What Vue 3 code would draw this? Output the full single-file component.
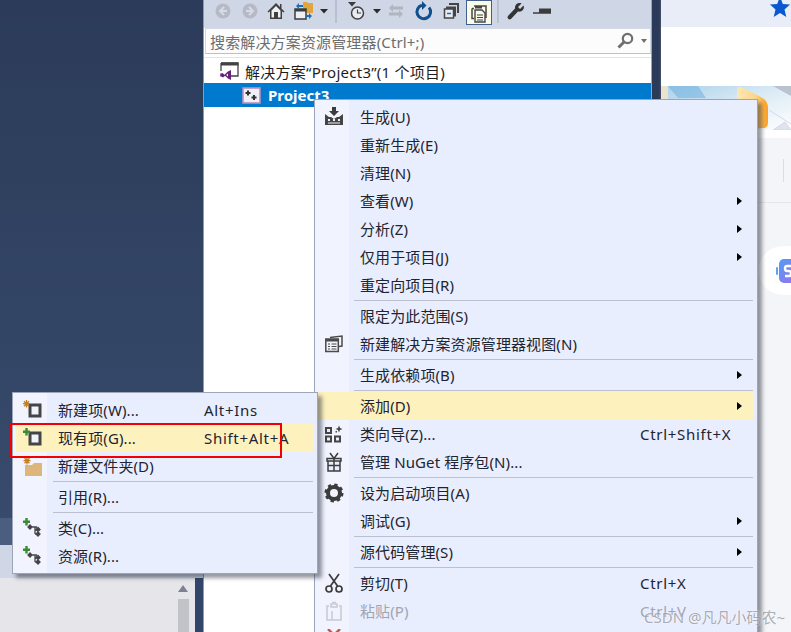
<script setup>
const tools = [
  { k: 'back', c: 's27' }, { k: 'forward', c: 's27' }, { k: 'home', c: 's26' }, { k: 'sync', c: 's30' },
  { k: 'dd', c: 's10' }, { k: 'sep', c: 's14' }, { k: 'history', c: 's28' }, { k: 'dd', c: 's12' },
  { k: 'swap', c: 's26' }, { k: 'refresh', c: 's29' }, { k: 'collapse', c: 's28' }, { k: 'pages', c: 's26 active' },
  { k: 'sep', c: 's11' }, { k: 'wrench', c: 's25' }, { k: 'minus', c: 's28' }
]

const icons = {
  back: '<circle cx="10" cy="10" r="7.5" fill="#b5bac6"/><path d="M11 6 7 10l4 4M7.5 10H14" fill="none" stroke="#d6dbe7" stroke-width="2"/>',
  forward: '<circle cx="10" cy="10" r="7.5" fill="#b5bac6"/><path d="M9 6l4 4-4 4M12.500 10H6" fill="none" stroke="#d6dbe7" stroke-width="2"/>',
  home: '<path d="M10 2 1.500 10.500l1 1L4 10.200V18h12v-7.800l1.500 1.300 1-1L15.500 7.500V3H14v3L10 2z" fill="#404040"/><path d="M5.500 9.500 10 5l4.500 4.500v7H12V11H8v5.500H5.500z" fill="#eef0f4"/>',
  sync: '<path d="M9 1h4l1 1h5v10H9z" fill="#e0a63c"/><path d="M1 8h11v10H1z" fill="#eef0f4" stroke="#3c3c3c" stroke-width="1.500"/><path d="M1 8h11v2.500H1z" fill="#3c3c3c"/><path d="M2 5 5 2v2h4v2H5v2z" fill="#1c6fb5"/><path d="M18 15l-3 3v-2h-3v-2h3v-2z" fill="#1c6fb5"/>',
  dd: '<path d="M6 8h8l-4 4.500z" fill="#2c2c2c"/>',
  sep: '<path d="M10 -2v24" stroke="#a3aabb"/>',
  history: '<path d="M1 1h8L5 5.500z" fill="#3c3c3c"/><circle cx="10.500" cy="12" r="6" fill="#e8ebf2" stroke="#404040" stroke-width="1.500"/><path d="M10.500 8.500V12H14" fill="none" stroke="#404040" stroke-width="1.200"/>',
  swap: '<path d="M7 3 3 7l4 4V8.500h10v-3H7zM13 9l4 4-4 4v-2.500H3v-3h10z" fill="#b0b5c0"/>',
  refresh: '<path d="M15 6.500A6.800 6.800 0 1 1 8 4.300" fill="none" stroke="#10508f" stroke-width="3"/><path d="M8 0v9l4.500-4.500z" fill="#10508f"/>',
  collapse: '<path d="M7 2h10v10h-2V4H7z" fill="#454545"/><rect x="4" y="5.500" width="10" height="10" fill="#454545"/><rect x="2.500" y="8" width="9" height="9" fill="#e8ebf2" stroke="#454545" stroke-width="1.500"/><path d="M5 12.500h4" stroke="#1c6fb5" stroke-width="1.500"/>',
  pages: '<path d="M5 3h12v12" fill="none" stroke="#454545" stroke-width="1.500"/><path d="M3 5.500h2M3 5.500v10h2" fill="none" stroke="#454545" stroke-width="1.500"/><rect x="6" y="3" width="7" height="2.500" fill="#454545"/><path d="M6 7h7l3 3v9H6z" fill="#f7f7ea" stroke="#454545" stroke-width="1.400"/><path d="M8 12h6M8 14.500h6M8 17h6" stroke="#454545"/>',
  wrench: '<path d="M17.500 4.500 14 8l-2-2 3.500-3.500C12.500 1 8.500 3 9 7.500L2 15c-1.500 2 1 4.500 3 3l7-7.500c4.500 1 7-3 5.500-6z" fill="#333"/>',
  minus: '<path d="M1 12h18" stroke="#3c3c3c" stroke-width="1.500"/><rect x="7" y="7.500" width="12" height="4.500" fill="#3c3c3c"/>',
  build: '<path d="M8 0h4v4h3l-5 5-5-5h3z" fill="#3c3c3c"/><path d="M1 18V7l4 3h2l3 2 3-2h2l4-3v11z" fill="#454545"/><path d="M4 12h2v2H4zM9 12h2v2H9zM14 12h2v2h-2zM4 15.500h12v1H4z" fill="#f0f3fe"/>',
  view: '<path d="M6 3.500 18 2v10l-3 .5" fill="none" stroke="#4a4a4a" stroke-width="1.500"/><rect x="1.800" y="5" width="12.500" height="12.500" fill="#f0f3fe" stroke="#4a4a4a" stroke-width="1.500"/><path d="M2 5h12v2.500H2z" fill="#4a4a4a"/><path d="M4 10h2M7.500 10h5M4 12.500h2M7.500 12.500h5M4 15h2M7.500 15h5" stroke="#4a4a4a"/>',
  wizard: '<rect x="1" y="3" width="7" height="7" fill="#454545"/><rect x="1" y="11.500" width="7" height="7" fill="#454545"/><rect x="10" y="11.500" width="7" height="7" fill="#454545"/><path d="M3 5h3v3H3zM3 13.500h3v3H3zM12 13.500h3v3h-3z" fill="#e9eefe"/><path d="M15 1.500l1 2.500 2.500 1-2.500 1-1 2.500-1-2.500-2.500-1 2.500-1z" fill="#454545"/><path d="M11.500 7h1.500v1.500h-1.500z" fill="#454545"/>',
  gift: '<path d="M4 9h12v10H4zM3 6.500h14V9H3zM10 6.500V19" fill="#e9eefe" stroke="#3c3c3c" stroke-width="1.500"/><path d="M4 13.500h12" stroke="#3c3c3c" stroke-width="1.500"/><path d="M6 1l4 5.500L14 1" fill="none" stroke="#3c3c3c" stroke-width="1.500"/>',
  gear: '<circle cx="10" cy="10" r="6" fill="none" stroke="#3c3c3c" stroke-width="4"/><circle cx="10" cy="10" r="8" fill="none" stroke="#3c3c3c" stroke-width="3" stroke-dasharray="3.200 3.080"/>',
  scissors: '<path d="M5 1l8.500 12M15 1 6.500 13" fill="none" stroke="#3c3c3c" stroke-width="1.700"/><circle cx="5" cy="16" r="3" fill="none" stroke="#3c3c3c" stroke-width="1.700"/><circle cx="15" cy="16" r="3" fill="none" stroke="#3c3c3c" stroke-width="1.700"/>',
  paste: '<path d="M5 5H3v14h14V5h-2" fill="none" stroke="#c6c9d2" stroke-width="1.500"/><path d="M7 6V3h2V1.500h2V3h2v3zM8 10v9" fill="none" stroke="#c6c9d2" stroke-width="1.500"/>',
  del: '<path d="M4 0l12 12M16 0 4 12" stroke="#c25a55" stroke-width="2.500"/>',
  newitem: '<rect x="8" y="5" width="10" height="11" fill="#f2f4fc" stroke="#454545" stroke-width="3"/><path d="M4.500 0v7.500M1 3.700h7M2 1.200l5 5M7 1.200l-5 5" stroke="#c77f1e" stroke-width="1.300"/>',
  existing: '<rect x="8" y="5" width="10" height="11" fill="#f2f4fc" stroke="#454545" stroke-width="3"/><path d="M4.500 0v7.500M1 3.700h7" stroke="#388a34" stroke-width="2.400"/>',
  folder: '<path d="M3 9h7l2-2h8v13H3z" fill="#dcb67a"/><path d="M5 1v7.500M1.500 4.700h7M2.500 2.200l5 5M7.500 2.200l-5 5" stroke="#c77f1e" stroke-width="1.300"/>',
  cls: '<path d="M4.500 0v7.500M1 3.700h7" stroke="#388a34" stroke-width="2.400"/><path d="M8 7l2 2-2 2-2-2zM10 9h5M13 9v7M13 12h2M13 16h2M16 9.500l2 2-2 2-2-2zM16 14l2 2-2 2-2-2z" fill="#454545" stroke="#454545" stroke-width="1.300"/>'
}

const mainMenu = [
  { t: '生成(U)', i: 'build' }, { t: '重新生成(E)' }, { t: '清理(N)' }, { t: '查看(W)', a: 1 }, { t: '分析(Z)', a: 1 },
  { t: '仅用于项目(J)', a: 1 }, { t: '重定向项目(R)' }, { sep: 1 },
  { t: '限定为此范围(S)' }, { t: '新建解决方案资源管理器视图(N)', i: 'view' }, { sep: 1 },
  { t: '生成依赖项(B)', a: 1 }, { sep: 1 },
  { t: '添加(D)', a: 1, hl: 1 }, { t: '类向导(Z)...', i: 'wizard', s: 'Ctrl+Shift+X' }, { t: '管理 NuGet 程序包(N)...', i: 'gift' }, { sep: 1 },
  { t: '设为启动项目(A)', i: 'gear' }, { t: '调试(G)', a: 1 }, { sep: 1 },
  { t: '源代码管理(S)', a: 1 }, { sep: 1 },
  { t: '剪切(T)', i: 'scissors', s: 'Ctrl+X' }, { t: '粘贴(P)', i: 'paste', s: 'Ctrl+V', off: 1 },
  { t: '', i: 'del' }
]

const subMenu = [
  { t: '新建项(W)...', i: 'newitem', s: 'Alt+Ins' }, { t: '现有项(G)...', i: 'existing', s: 'Shift+Alt+A', hl: 1 },
  { t: '新建文件夹(D)', i: 'folder' }, { sep: 1 }, { t: '引用(R)...' }, { sep: 1 },
  { t: '类(C)...', i: 'cls' }, { t: '资源(R)...', i: 'cls' }
]

const menus = [
  { cls: 'main', items: mainMenu },
  { cls: 'sub', items: subMenu }
]
</script>

<template>
  <div class="screen">
    <aside class="desk">
      <div class="desk-fill"></div>
      <div class="band-a"></div>
      <div class="band-b"></div>
      <div class="desk-bottom">
        <div class="grey">
          <div class="scroll">
            <span class="scroll-up"></span>
            <span class="scroll-thumb"></span>
          </div>
        </div>
        <div class="navy-edge"></div>
      </div>
    </aside>

    <section class="explorer">
      <div class="toolbar">
        <span v-for="(t, n) in tools" :key="n" class="tool" :class="t.c">
          <svg width="20" height="20" viewBox="0 0 20 20" v-html="icons[t.k]"></svg>
        </span>
      </div>
      <div class="search">
        <span class="search-text">搜索解决方案资源管理器(Ctrl+;)</span>
        <svg class="lens" width="18" height="18" viewBox="0 0 18 18">
          <circle cx="10.500" cy="6.500" r="4.700" fill="none" stroke="#6f6f6f" stroke-width="2.200"/>
          <path d="M7 10 1.500 15.500" stroke="#6f6f6f" stroke-width="3"/>
        </svg>
        <span class="search-dd"></span>
      </div>
      <div class="tree">
        <div class="node sol">
          <svg width="19" height="18" viewBox="0 0 19 18">
            <path d="M1 1h17v13h-7" fill="#fff" stroke="#424242" stroke-width="1.300"/>
            <path d="M1 .5h17.500v3H1z" fill="#424242"/>
            <path d="M1 1v8" stroke="#424242" stroke-width="1.300"/>
            <path d="M11 8v10l-3-1.500-3-2.800-2 1.800L.5 14V12l2-1 2 1.800 3-3zM8 11.500l-1.800 1.500L8 14.500z" fill="#68217a"/>
            <path d="M.5 11l2.500 2-2.500 2z" fill="#68217a"/>
          </svg>
          <span class="sol-text">解决方案“Project3”(1 个项目)</span>
        </div>
        <div class="node proj">
          <svg width="19" height="17" viewBox="0 0 19 17">
            <rect x="1" y="1" width="17" height="15" fill="#eef0f5" stroke="#b791c4" stroke-width="1.600"/>
            <path d="M6 3.500v5M3.500 6h5M12 8v5M9.500 10.500h5" stroke="#333" stroke-width="2"/>
          </svg>
          <b>Project3</b>
        </div>
      </div>
    </section>

    <div class="gap"></div>

    <aside class="page">
      <div class="page-top">
        <svg class="star" width="20" height="18" viewBox="0 0 20 18">
          <path d="M10-3.500 12.800 4 20 4.500l-5.500 5 1.800 7.500L10 13l-6.300 4 1.800-7.500L0 4.500 7.200 4z" fill="#0b57d0"/>
        </svg>
      </div>
      <div class="page-white"></div>
      <svg class="banner" width="130" height="44" viewBox="0 0 130 44">
        <defs>
          <linearGradient id="bg" x1="0" y1="0" x2="1" y2="1">
            <stop offset="0" stop-color="#a8d0ea"/>
            <stop offset=".5" stop-color="#dcebf5"/>
            <stop offset="1" stop-color="#ffffff"/>
          </linearGradient>
          <linearGradient id="or" x1="0" y1="0" x2="1" y2="0">
            <stop offset="0" stop-color="#fde7b5"/>
            <stop offset=".6" stop-color="#fdd58a"/>
            <stop offset="1" stop-color="#ff9f1c"/>
          </linearGradient>
        </defs>
        <rect width="130" height="44" fill="url(#bg)"/>
        <rect width="7" height="44" fill="#ece2d2"/>
        <path d="M7 0h30l8 12-28 0z" fill="#6fb1de" opacity=".55"/>
        <path d="M112 0h18v10z" fill="#b9c2cf"/>
        <path d="M108 24l22 14M112 44l12-8 6 8z" fill="#dbe5f0" stroke="#d9d5e8"/>
        <path d="M76 4q0-5 6-2l16 8q9 4 9 12v14q0 7-6 6l-25 2z" fill="url(#or)"/>
      </svg>
      <div class="page-white short"></div>
      <div class="page-bar"><span class="vline"></span></div>
      <div class="pill">
        <svg width="16" height="26" viewBox="0 0 16 26">
          <defs>
            <linearGradient id="pl" x1="0" y1="0" x2="1" y2="1">
              <stop offset="0" stop-color="#4f9df5"/>
              <stop offset="1" stop-color="#a26df0"/>
            </linearGradient>
          </defs>
          <rect x="0" y="9" width="2" height="8" rx="1" fill="#5ea3f2"/>
          <rect x="3" y="1" width="20" height="24" rx="5" fill="url(#pl)"/>
          <path d="M15 8h-4q-2 0-2 2.500T11 13h2q2 0 2 2.500T13 18H9" fill="none" stroke="#fff" stroke-width="2.400"/>
        </svg>
      </div>
    </aside>

    <div v-for="m in menus" :key="m.cls" class="menu" :class="m.cls">
      <template v-for="(it, n) in m.items" :key="n">
        <div v-if="it.sep" class="divider"><i></i></div>
        <div v-else class="row" :class="{ hl: it.hl, off: it.off }">
          <span class="ico">
            <svg v-if="it.i" width="20" height="20" viewBox="0 0 20 20" v-html="icons[it.i]"></svg>
          </span>
          <span v-if="it.t" class="label">{{ it.t }}</span>
          <span v-if="it.s" class="keys">{{ it.s }}</span>
          <span v-if="it.a" class="arrow"></span>
        </div>
      </template>
    </div>

    <div class="redbox"></div>
    <div class="mark">CSDN @凡凡小码农~</div>
  </div>
</template>

<style scoped>
.screen {
  position: relative;
  display: flex;
  width: 791px;
  height: 632px;
  overflow: hidden;
  font-family: "Noto Sans", "Noto Sans CJK SC", sans-serif;
  font-size: 15px;
  color: #1e2430;
}

/* left desktop */
.desk {
  display: flex;
  flex-direction: column;
  width: 203px;
  flex: none;
}
.desk-fill {
  height: 518px;
  background: linear-gradient(#2b3b59, #384b6c);
}
.band-a {
  height: 27px;
  background: #4a5f80;
}
.band-b {
  height: 33px;
  background: #cfd6e5;
}
.desk-bottom {
  flex: 1;
  display: flex;
}
.grey {
  flex: 1;
  background: #e6e6ea;
  display: flex;
  justify-content: flex-end;
  padding-right: 6px;
}
.scroll {
  width: 11px;
  display: flex;
  flex-direction: column;
  padding-top: 7px;
}
.scroll-up {
  width: 0;
  height: 0;
  border-left: 5.5px solid transparent;
  border-right: 5.5px solid transparent;
  border-bottom: 7px solid #7d8190;
}
.scroll-thumb {
  flex: 1;
  margin-top: 7px;
  background: #c2c3c9;
}
.navy-edge {
  width: 8px;
  background: #33466a;
}

/* solution explorer */
.explorer {
  width: 449px;
  flex: none;
  display: flex;
  flex-direction: column;
  background: #fff;
  border-left: 1px solid #8d9ab6;
  border-right: 1px solid #9aa5bc;
  box-sizing: border-box;
}
.toolbar {
  display: flex;
  align-items: flex-start;
  height: 28px;
  padding-left: 5px;
  background: #cfd6e5;
}
.tool {
  height: 22px;
  display: flex;
  align-items: center;
  justify-content: center;
  flex: none;
}
.tool svg {
  flex: none;
  overflow: visible;
}
.s10 { width: 10px; }
.s11 { width: 11px; }
.s12 { width: 12px; }
.s14 { width: 14px; }
.s25 { width: 25px; }
.s26 { width: 26px; }
.s27 { width: 27px; }
.s28 { width: 28px; }
.s29 { width: 29px; }
.s30 { width: 30px; }
.active {
  height: 25px;
  box-sizing: border-box;
  border: 1px solid #41608f;
  background: #fbfbea;
}
.search {
  height: 26px;
  margin-left: 1px;
  box-sizing: border-box;
  border: 1px solid #d3d8e4;
  border-bottom-color: #b9c0cf;
  background: #fcfcfc;
  display: flex;
  align-items: center;
  padding-left: 4px;
}
.search-text {
  flex: 1;
  color: #6d6d6d;
  letter-spacing: .15px;
}
.lens {
  margin-right: 6px;
}
.search-dd {
  width: 0;
  height: 0;
  margin-right: 3px;
  border-left: 3.5px solid transparent;
  border-right: 3.5px solid transparent;
  border-top: 4px solid #6f6f6f;
}
.tree {
  flex: 1;
  margin-top: 3px;
  padding-top: 1px;
  border-top: 1px solid #dfe3ec;
  background: #fff;
}
.node {
  display: flex;
  align-items: center;
  height: 24px;
}
.sol {
  padding-left: 16px;
  gap: 6px;
  color: #1e1e1e;
}
.sol-text {
  letter-spacing: .25px;
}
.proj {
  padding-left: 38px;
  gap: 7px;
  background: #007acf;
  color: #fff;
}
.proj b {
  font-weight: 700;
}

/* gap + right page */
.gap {
  width: 9px;
  flex: none;
  background: linear-gradient(90deg, #2a3a58, #2a3a58 7px, #46526b);
}
.page {
  width: 130px;
  flex: none;
  background: #f4f5f8;
}
.page-top {
  height: 27px;
  background: #e9edf7;
  display: flex;
  justify-content: flex-end;
  padding-right: 1px;
}
.page-white {
  height: 59px;
  background: #fff;
}
.page-white.short {
  height: 8px;
}
.banner {
  display: block;
}
.page-bar {
  height: 65px;
  border-bottom: 1px solid #e6e6ea;
  display: flex;
  justify-content: flex-end;
  padding: 21px 7px 0 0;
  box-sizing: border-box;
}
.vline {
  width: 1px;
  height: 23px;
  background: #dcdde2;
}
.pill {
  margin: 43px 0 0 98px;
  height: 49px;
  border-radius: 24px 0 0 24px;
  background: #fff;
  box-sizing: border-box;
  padding: 12px 0 0 17px;
  overflow: hidden;
}
.pill svg {
  display: block;
}

/* context menus */
.menu {
  position: absolute;
  box-sizing: border-box;
  border: 1px solid #9ca5b9;
  padding: 3px;
  box-shadow: 4px 4px 4px rgba(20, 25, 40, .45);
}
.main {
  left: 314px;
  top: 99px;
  width: 444px;
  height: 560px;
  background: linear-gradient(90deg, #f1f4ff 34px, #e9eefe 34px);
}
.sub {
  left: 12px;
  top: 392px;
  width: 306px;
  height: 182px;
  background: linear-gradient(90deg, #f1f4ff 34px, #e9eefe 34px);
}
.row {
  display: flex;
  align-items: center;
  height: 28px;
  line-height: 28px;
  white-space: nowrap;
}
.row.hl {
  background: #fdf2be;
}
.row.off {
  color: #a2a4ad;
}
.ico {
  width: 42px;
  flex: none;
  padding-left: 6px;
  box-sizing: border-box;
  display: flex;
  align-items: center;
}
.label {
  letter-spacing: .1px;
}
.keys {
  letter-spacing: .7px;
}
.main .label {
  width: 280px;
  flex: none;
}
.sub .label {
  width: 146px;
  flex: none;
}
.arrow {
  margin-left: auto;
  margin-right: 12px;
  width: 0;
  height: 0;
  border-left: 5px solid #000;
  border-top: 4.5px solid transparent;
  border-bottom: 4.5px solid transparent;
}
.divider {
  height: 3px;
  display: flex;
  align-items: center;
}
.divider i {
  display: block;
  flex: 1;
  height: 1px;
  background: #bcc0cf;
}
.main .divider i {
  margin: 0 1px 0 36px;
}
.sub .divider i {
  margin: 0 1px 0 37px;
}

.redbox {
  position: absolute;
  left: 10px;
  top: 423px;
  width: 272px;
  height: 35px;
  box-sizing: border-box;
  border: 2px solid #f20000;
}
.mark {
  position: absolute;
  right: 6px;
  top: 606px;
  color: rgba(130, 130, 135, .65);
  text-shadow: 0 0 2px rgba(255, 255, 255, .8);
  white-space: nowrap;
}
</style>
